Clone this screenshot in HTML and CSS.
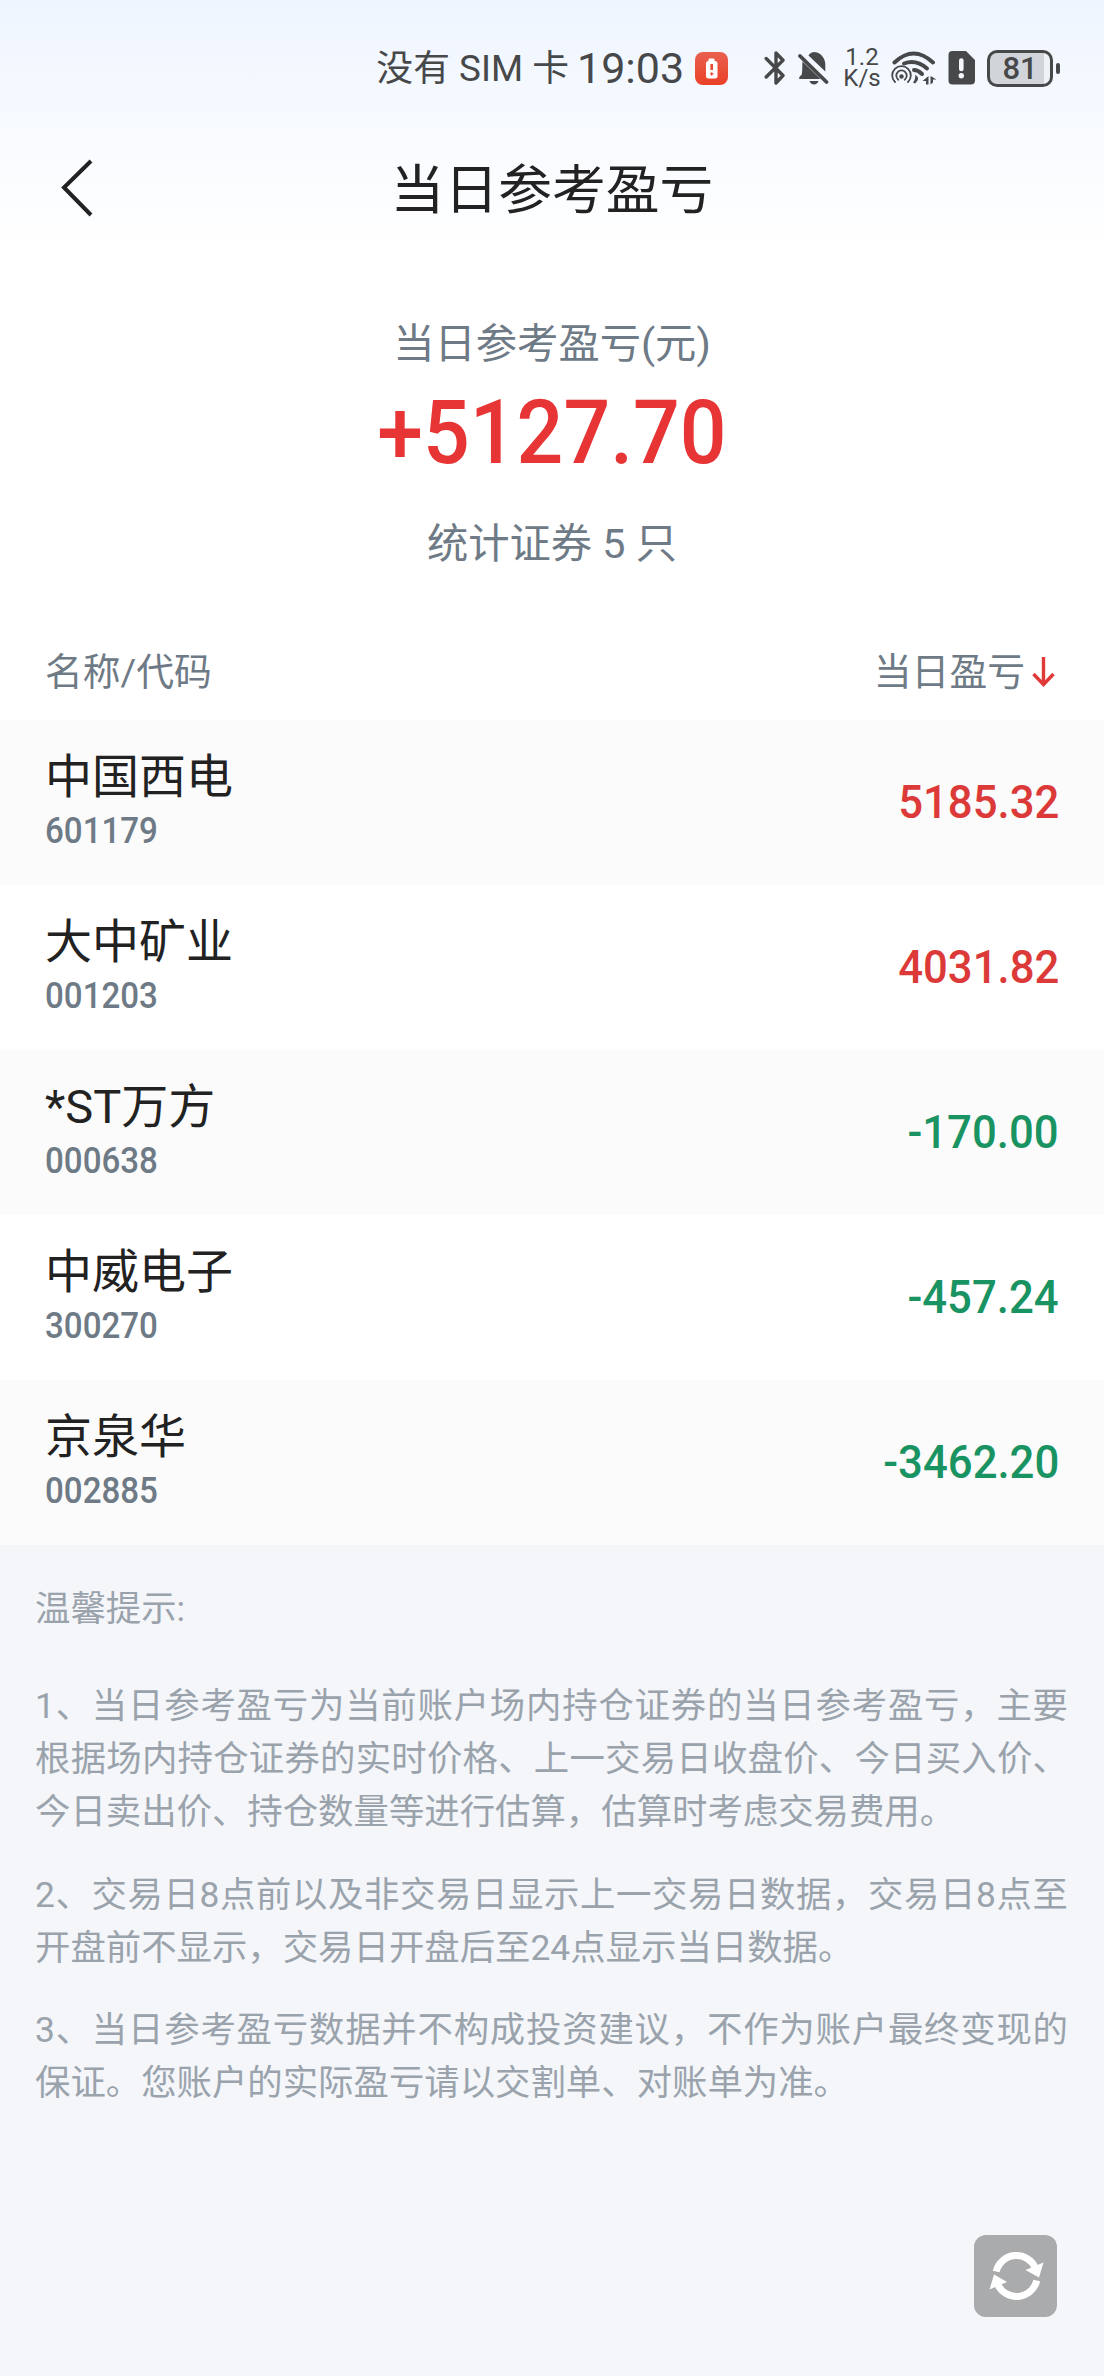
FILE: index.html
```html
<!DOCTYPE html>
<html lang="zh-CN">
<head>
<meta charset="utf-8">
<title>当日参考盈亏</title>
<link rel="stylesheet" href="styles.css">
</head>
<body>
<div class="page">
  <header class="top">
    <div class="status">
      <span class="carrier">没有 SIM 卡</span>
      <span class="clock">19:03</span>
      <svg class="alert" width="33" height="33" viewBox="0 0 33 33"><defs><linearGradient id="alert-bg" x1="0" y1="0" x2="0" y2="1"><stop offset="0" stop-color="#e9604f"/><stop offset="1" stop-color="#ea4128"/></linearGradient></defs><rect width="33" height="33" rx="8" fill="url(#alert-bg)"/><rect x="13.5" y="6.500" width="6" height="4" rx="1" fill="#fff"/><rect x="11" y="9" width="11.500" height="17.500" rx="2.500" fill="#fff"/><path d="M16.700 12v6" stroke="#ea4a35" stroke-width="2.600"/><path d="M15 21.800h3.500M16.700 20.200v3.400" stroke="#ea4a35" stroke-width="1.300"/></svg>
      <svg class="bt" width="22" height="36" viewBox="0 0 22 36"><path d="M2.200 8.500L19 25.500l-7 7.500V3l7 7.200L2.200 27" fill="none" stroke="#47484a" stroke-width="3.400" stroke-linejoin="round" stroke-linecap="round"/></svg>
      <svg class="bell" width="31" height="34" viewBox="0 0 31 34"><g fill="#47484a"><path d="M4.500 10.500L22.500 28H1.500c-1-1.500 0-2.500 2.200-4.200 1-4.500.3-9 .8-13.300z"/><path d="M10.500 4.500C12 1.500 16 0 19 1.500c5 2 8 6 8.300 11.500v7.500z"/><path d="M11.500 30h9c-1 4.500-8 4.500-9 0z"/></g><path d="M2 5l26.500 26" stroke="#47484a" stroke-width="3.800" stroke-linecap="round"/></svg>
      <span class="speed"><span>1.2</span><span>K/s</span></span>
      <svg class="wifi" width="46" height="36" viewBox="0 0 46 36"><g fill="none" stroke="#47484a" stroke-linecap="round"><path d="M3.500 12.500Q22.500-5.500 42 12.500" stroke-width="4"/><path d="M13 13.500Q25 9 36 18.500" stroke-width="4"/><path d="M23 20q4 0 8 4" stroke-width="4"/><path d="M4 32a9.300 9.300 0 1 1 13 0" stroke-width="1.800"/><path d="M7.300 29.700a5.200 5.200 0 1 1 6.400 0" stroke-width="1.800"/></g><circle cx="10.500" cy="26.500" r="2.200" fill="#47484a"/><path d="M24 24.500q6 4 0 9l-2-1q3-4 2-8zM37.500 26v8.500h-2.500V31h-3.500zM39.500 26l6 3.500h-3.500v3l-2.500 2z" fill="#47484a"/></svg>
      <svg class="sim" width="27" height="34" viewBox="0 0 27 34"><path d="M4.500 0h13.500l9 9v20.500a4 4 0 0 1-4 4H4.500a4 4 0 0 1-4-4V4a4 4 0 0 1 4-4z" fill="#47484a"/><path d="M13.300 9.500v8.500" stroke="#f4f8fe" stroke-width="4.600" stroke-linecap="round"/><circle cx="13.300" cy="24.800" r="2.700" fill="#f4f8fe"/></svg>
      <span class="battery"><span class="cell">81</span><span class="nub"></span></span>
    </div>
    <div class="nav">
      <svg class="back" width="34" height="58" viewBox="0 0 34 58"><path d="M31 2L4 28.500 31 56" fill="none" stroke="#222" stroke-width="4"/></svg>
      <h1 class="title">当日参考盈亏</h1>
    </div>
  </header>

  <section class="summary">
    <div class="label">当日参考盈亏(元)</div>
    <div class="total">+5127.70</div>
    <div class="count">统计证券 5 只</div>
  </section>

  <div class="table-head">
    <span>名称/代码</span>
    <span class="sort">当日盈亏<svg width="23" height="32" viewBox="0 0 23 32"><path d="M11.500 1v27M1.500 18l10 10.500 10-10.500" fill="none" stroke="#e03a38" stroke-width="3.400"/></svg></span>
  </div>

  <main class="rows">
    <div class="row"><div><div class="name">中国西电</div><div class="code">601179</div></div><div class="value up">5185.32</div></div>
    <div class="row"><div><div class="name">大中矿业</div><div class="code">001203</div></div><div class="value up">4031.82</div></div>
    <div class="row"><div><div class="name">*ST万方</div><div class="code">000638</div></div><div class="value down">-170.00</div></div>
    <div class="row"><div><div class="name">中威电子</div><div class="code">300270</div></div><div class="value down">-457.24</div></div>
    <div class="row"><div><div class="name">京泉华</div><div class="code">002885</div></div><div class="value down">-3462.20</div></div>
  </main>

  <footer class="tips">
    <div class="tips-title">温馨提示:</div>
    <p>1、当日参考盈亏为当前账户场内持仓证券的当日参考盈亏，主要根据场内持仓证券的实时价格、上一交易日收盘价、今日买入价、今日卖出价、持仓数量等进行估算，估算时考虑交易费用。</p>
    <p>2、交易日8点前以及非交易日显示上一交易日数据，交易日8点至开盘前不显示，交易日开盘后至24点显示当日数据。</p>
    <p>3、当日参考盈亏数据并不构成投资建议，不作为账户最终变现的保证。您账户的实际盈亏请以交割单、对账单为准。</p>
    <button class="refresh" aria-label="刷新"><svg width="55" height="50" viewBox="0 0 55 50"><g fill="none" stroke="#fff" stroke-width="7"><path d="M7.200 20.500A20.800 20.800 0 0 1 46.500 17"/><path d="M47.800 29.500A20.800 20.800 0 0 1 8.500 33"/></g><path d="M54.500 11.500L50 26.500 36.500 19zM.5 38.500L5 23.500 18 31z" fill="#fff"/></svg></button>
  </footer>
</div>
</body>
</html>
```
FILE: styles.css
```css
* { box-sizing: border-box; }
body {
  margin: 0;
  background: #f4f6fa;
  color: #222;
  font-family: Roboto, "Noto Sans CJK SC", sans-serif;
}
.page {
  width: 1104px;
  height: 2376px;
  display: flex;
  flex-direction: column;
  background: #fff;
}
.top {
  height: 250px;
  flex: none;
  background: linear-gradient(#eff5ff, #fff);
}
.status {
  height: 136px;
  padding-right: 44px;
  display: flex;
  align-items: center;
  justify-content: flex-end;
  color: #47484a;
  white-space: nowrap;
}
.carrier { padding-bottom: 6px; font-size: 36.800px; }
.clock { margin-left: 8px; width: 104px; font-size: 43px; }
.alert { margin-left: 14px; }
.bt { margin-left: 36px; }
.bell { margin-left: 12px; }
.speed {
  margin-left: 15px;
  width: 36px;
  display: flex;
  flex-direction: column;
  align-items: center;
  font-size: 24px;
  line-height: 21.500px;
}
.wifi { margin-left: 11px; }
.sim { margin-left: 11px; }
.battery { margin-left: 12px; display: flex; align-items: center; gap: 3px; }
.cell {
  width: 66px;
  height: 37px;
  border: 3px solid #47484a;
  border-radius: 10px;
  background: linear-gradient(90deg, #d1d5d9 54px, #eef2f7 54px);
  font-size: 31px;
  font-weight: 500;
  line-height: 32px;
  text-align: center;
}
.nub { width: 4px; height: 11px; border-radius: 2px; background: #47484a; }
.nav {
  height: 104px;
  display: grid;
  grid-template-columns: 120px 1fr 120px;
  align-items: center;
}
.back { margin-left: 60px; }
.title {
  margin: 0;
  padding-top: 5px;
  text-align: center;
  font-size: 53.800px;
  font-weight: 400;
  line-height: 80px;
}
.summary {
  height: 346px;
  flex: none;
  padding-top: 64px;
  text-align: center;
  color: #6e7a85;
}
.label, .count { font-size: 41.300px; line-height: 60px; }
.total {
  margin: 9px 0 31px;
  font-size: 89px;
  font-weight: 500;
  line-height: 100px;
  color: #e73434;
  transform: scaleX(0.925);
}
.table-head {
  height: 124px;
  flex: none;
  padding: 20px 49px 0 45px;
  display: flex;
  justify-content: space-between;
  align-items: center;
  font-size: 37.800px;
  color: #6e7a85;
}
.sort { display: flex; align-items: center; gap: 7px; }
.sort svg { margin-top: 8px; }
.row {
  height: 165px;
  padding: 0 45px 4px;
  display: flex;
  justify-content: space-between;
  align-items: center;
}
.row:nth-child(odd) { background: #fbfbfb; }
.name { font-size: 47px; line-height: 60px; }
.code {
  margin-top: 1px;
  font-size: 36px;
  font-weight: 500;
  line-height: 46px;
  color: #6e7a85;
  transform: scaleX(0.92);
  transform-origin: left;
}
.value {
  padding-top: 2px;
  font-size: 47px;
  font-weight: 500;
  transform: scaleX(0.93);
  transform-origin: right;
}
.up { color: #dc3a38; }
.down { color: #1a9363; }
.tips {
  flex: 1;
  padding: 38px 36px 0 35px;
  position: relative;
  background: #f4f6fa;
  color: #9aa3ac;
  font-size: 35.400px;
  line-height: 53px;
}
.tips-title { margin-bottom: 44px; }
.tips p { margin: 0 0 29.500px; text-align: justify; }
.refresh {
  position: absolute;
  right: 47px;
  bottom: 59px;
  width: 83px;
  height: 82px;
  padding: 0 0 0 2px;
  border: 0;
  border-radius: 12px;
  background: #aaabad;
  display: flex;
  align-items: center;
  justify-content: center;
}
```
